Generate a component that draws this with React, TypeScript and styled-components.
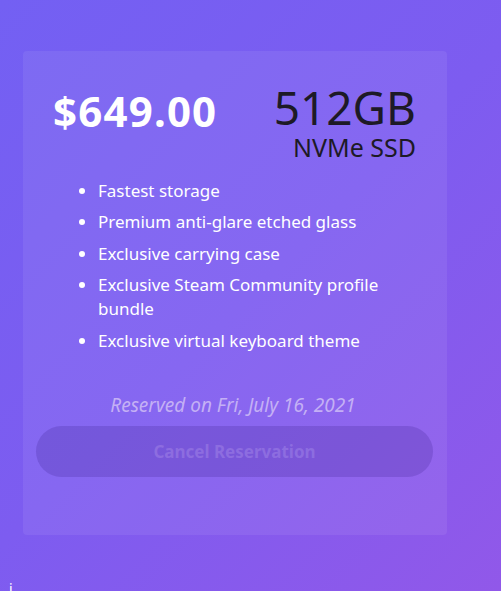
import React, { FC } from 'react';
import styled, { createGlobalStyle } from 'styled-components';

const GlobalStyle = createGlobalStyle`
	html, body {
		margin: 0;
		padding: 0;
	}
	body {
		background: linear-gradient(135deg, #7360f3 0%, #7d5cf0 50%, #9158e9 100%);
		min-height: 591px;
		font-family: 'Noto Sans', 'Open Sans', sans-serif;
		overflow: hidden;
	}
`;

type Feature = string;

const features: Feature[] = [
	'Fastest storage',
	'Premium anti-glare etched glass',
	'Exclusive carrying case',
	'Exclusive Steam Community profile bundle',
	'Exclusive virtual keyboard theme',
];

const ReservationCard: FC = () => (
	<Card>
		<Header>
			<Price>$649.00</Price>
			<Storage>
				<Capacity>512GB</Capacity>
				<StorageType>NVMe SSD</StorageType>
			</Storage>
		</Header>
		<FeatureList>
			{features.map((f) => (
				<FeatureItem key={f}>{f}</FeatureItem>
			))}
		</FeatureList>
		<ReservedNote>Reserved on Fri, July 16, 2021</ReservedNote>
		<CancelButton disabled>Cancel Reservation</CancelButton>
	</Card>
);

const App: FC = () => (
	<>
		<GlobalStyle />
		<Page>
			<ReservationCard />
			<Footnote>i</Footnote>
		</Page>
	</>
);

const Page = styled.div`
	padding: 51px 54px 0 23px;
	height: 591px;
	box-sizing: border-box;
`;

const Card = styled.div`
	width: 424px;
	height: 484px;
	box-sizing: border-box;
	border-radius: 4px;
	background: rgba(255, 255, 255, 0.07);
	padding: 30px 13px 0;
	display: flex;
	flex-direction: column;
`;

const Header = styled.div`
	display: flex;
	justify-content: space-between;
	align-items: flex-start;
	padding: 0 18px 0 17px;
`;

const Price = styled.div`
	color: #ffffff;
	font-size: 42px;
	font-weight: 700;
	letter-spacing: 1.2px;
	line-height: 1;
	margin-top: 9px;
`;

const Storage = styled.div`
	display: flex;
	flex-direction: column;
	align-items: flex-end;
	color: #1d1a26;
`;

const Capacity = styled.div`
	font-size: 46px;
	line-height: 44px;
	margin-top: 4px;
`;

const StorageType = styled.div`
	font-size: 25px;
	line-height: 25px;
	margin-top: 6px;
`;

const FeatureList = styled.ul`
	margin: 19px 0 0;
	padding: 0 30px 0 62px;
	color: #ffffff;
	font-size: 17px;
	line-height: 24px;
	display: flex;
	flex-direction: column;
	gap: 7.4px;
`;

const FeatureItem = styled.li``;

const ReservedNote = styled.div`
	margin-top: 39px;
	text-align: center;
	font-style: italic;
	font-size: 19px;
	line-height: 26px;
	color: #c4b0f5;
	margin-left: -4px;
`;

const CancelButton = styled.button`
	margin-top: 8px;
	height: 51px;
	width: 397px;
	border: none;
	border-radius: 26px;
	background: rgba(60, 30, 140, 0.22);
	color: #8d6de0;
	font-family: 'Noto Sans', 'Open Sans', sans-serif;
	font-size: 17px;
	font-weight: 700;
	padding: 0;
`;

const Footnote = styled.div`
	margin: 44px 0 0 -14px;
	color: #ffffff;
	font-size: 14px;
`;

export default App;
